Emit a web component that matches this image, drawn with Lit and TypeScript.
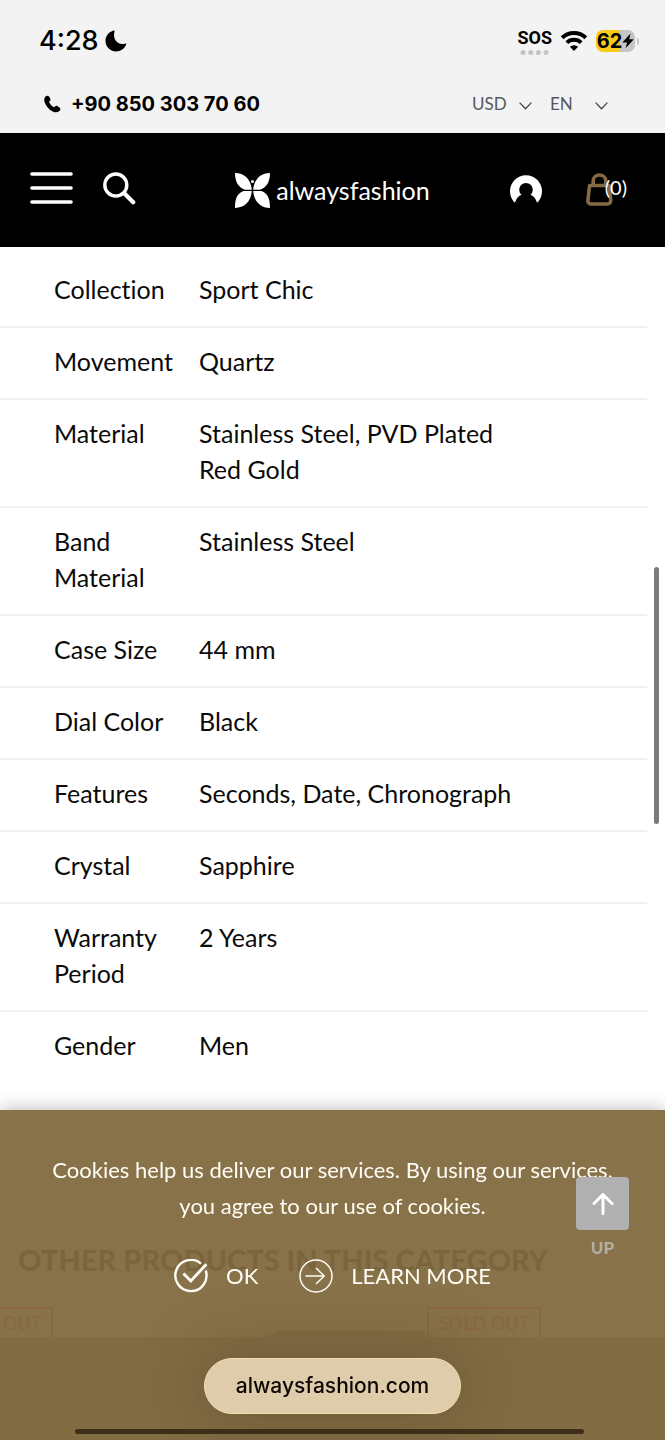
import { LitElement, html, css, svg } from "lit";
import { customElement } from "lit/decorators.js";

const SPECS: [string, string][] = [
  ["Collection", "Sport Chic"],
  ["Movement", "Quartz"],
  ["Material", "Stainless Steel, PVD Plated Red Gold"],
  ["Band Material", "Stainless Steel"],
  ["Case Size", "44 mm"],
  ["Dial Color", "Black"],
  ["Features", "Seconds, Date, Chronograph"],
  ["Crystal", "Sapphire"],
  ["Warranty Period", "2 Years"],
  ["Gender", "Men"],
];

@customElement("status-bar")
class StatusBar extends LitElement {
  static styles = css`
    :host { display: flex; justify-content: space-between; align-items: center; height: 82px; padding: 0 26px 0 39px; color: #000; }
    .left, .right { display: flex; align-items: center; }
    .left { gap: 6px; font: 500 27px/32px Inter, sans-serif; }
    .right { gap: 8px; }
    .sos { display: grid; justify-items: center; gap: 2px; font: 700 18px/20px Roboto, sans-serif; }
    .battery { display: flex; align-items: center; gap: 2px; }
    .cell { display: flex; align-items: center; justify-content: center; width: 39px; height: 22px; border-radius: 7px; background: linear-gradient(90deg, #fbc917 62%, #c6c6c6 62%); font: 700 20px/22px Inter, sans-serif; }
    .nub { width: 2px; height: 7px; border-radius: 0 2px 2px 0; background: #c6c6c6; }
    svg { display: block; }
  `;
  render() {
    return html`
      <div class="left">
        <span>4:28</span>
        <svg width="22" height="22" viewBox="0 0 22 22"><path d="M8.600.6C3.900 2 .5 6 .5 10.700 .5 16.600 5 21.400 11 21.400c4.700 0 8.700-2.800 10.300-7.200.2-.6-.2-.9-.8-.7-7.200 2.500-13.400-4-11-12 .2-.6-.2-1.100-.9-.9Z" /></svg>
      </div>
      <div class="right">
        <span class="sos">SOS
          <svg width="29" height="5" viewBox="0 0 29 5" fill="#c4c4c4"><circle cx="3" cy="2.500" r="2.500" /><circle cx="10.700" cy="2.500" r="2.500" /><circle cx="18.300" cy="2.500" r="2.500" /><circle cx="26" cy="2.500" r="2.500" /></svg>
        </span>
        <svg width="28" height="22" viewBox="0 0 28 22">
          <path d="M14 21 9.900 16.800a6 6 0 0 1 8.200 0Z" />
          <path d="M6.800 12.600a10.600 10.600 0 0 1 14.400 0M2.200 7.700a17 17 0 0 1 23.600 0" fill="none" stroke="#000" stroke-width="4" />
        </svg>
        <div class="battery">
          <div class="cell">62<svg width="12" height="16" viewBox="0 0 12 16"><path d="M8.500.5.8 8.900c-.3.400-.1.700.3.700h4L3.600 15.200 11.200 7.100c.4-.4.2-.8-.3-.8H7.200Z" /></svg></div>
          <span class="nub"></span>
        </div>
      </div>`;
  }
}

@customElement("contact-bar")
class ContactBar extends LitElement {
  static styles = css`
    :host { display: flex; justify-content: space-between; align-items: center; height: 44px; padding: 0 57px 0 44px; font-family: Lato, sans-serif; }
    .phone { display: flex; align-items: center; gap: 10px; color: #000; text-decoration: none; font: 700 20px/24px Inter, sans-serif; }
    .picks { display: flex; gap: 18px; }
    .pick { display: grid; align-items: center; }
    .pick select, .pick svg { grid-area: 1 / 1; }
    .pick svg { justify-self: end; margin-top: 4px; pointer-events: none; }
    select { appearance: none; border: 0; margin: 0; padding: 0 25px 0 0; background: none; color: #55585e; font: 400 17px/24px Lato, sans-serif; }
    .lang { padding-right: 35px; }
    svg { display: block; }
  `;
  chevron() {
    return svg`<svg width="13" height="8" viewBox="0 0 13 8" fill="none" stroke="#444" stroke-width="1.300"><path d="m.6.6 5.900 6.200L12.400.6" /></svg>`;
  }
  render() {
    return html`
      <a class="phone" href="tel:+908503037060">
        <svg width="17" height="18" viewBox="0 0 17 18"><path d="M1.500 1.600C2.700.4 4.200.5 5 1.600l1.200 1.900c.6 1 .3 2-.5 2.600-.6.500-.7.900-.4 1.500 1 1.900 2.200 3.300 4.100 4.400.6.300 1 .2 1.500-.4.700-.8 1.700-1 2.600-.4l2 1.400c1.100.8 1.200 2.100.1 3.200-1.600 1.700-4 1.900-6.800.6C5.200 14.700 2.100 11.300.7 7.400-.1 5 .1 3 1.500 1.600Z" /></svg>
        <span>+90 850 303 70 60</span>
      </a>
      <div class="picks">
        <div class="pick"><select aria-label="Currency"><option>USD</option></select>${this.chevron()}</div>
        <div class="pick"><select class="lang" aria-label="Language"><option>EN</option></select>${this.chevron()}</div>
      </div>`;
  }
}

@customElement("site-header")
class SiteHeader extends LitElement {
  static styles = css`
    :host { display: grid; grid-template-columns: 1fr auto 1fr; align-items: center; height: 114px; background: #000; color: #fff; }
    button { display: flex; padding: 0; border: 0; background: none; color: inherit; }
    .side { display: flex; align-items: center; gap: 30px; padding: 0 0 4px 30px; }
    .end { justify-content: flex-end; gap: 44px; padding: 0 38px 2px 0; }
    .logo { display: flex; align-items: center; gap: 6px; color: #fff; text-decoration: none; font: 400 25px/34px Lato, sans-serif; }
    .bag { display: grid; width: 41px; align-items: center; }
    .bag svg, .count { grid-area: 1 / 1; }
    .count { justify-self: end; padding-bottom: 4px; font: 400 20px/24px Lato, sans-serif; }
    svg { display: block; }
  `;
  render() {
    return html`
      <div class="side">
        <button aria-label="Menu"><svg width="43" height="32" viewBox="0 0 43 32" stroke="#fff" stroke-width="3.600" stroke-linecap="round"><path d="M2 2h39M2 16h39M2 30h39" /></svg></button>
        <button aria-label="Search"><svg width="33" height="33" viewBox="0 0 33 33" fill="none" stroke="#fff" stroke-linecap="round"><circle cx="12.800" cy="13" r="11" stroke-width="3.400" /><path d="m21.500 21.500 8.700 8.700" stroke-width="4.200" /></svg></button>
      </div>
      <a class="logo" href="/">
        <svg width="35" height="35" viewBox="0 0 35 35" fill="#fff">
          <path d="M0 0c9 0 16 6 16.800 16.700H10C3.500 14.500 0 9 0 0ZM35 0c-9 0-16 6-16.800 16.700H25C31.500 14.500 35 9 35 0ZM0 35c9 0 16-6 16.800-16.900H8.500C2 20.500 0 26 0 35ZM35 35c-9 0-16-6-16.800-16.900H26.500C33 20.500 35 26 35 35Z" />
          <circle cx="17.500" cy="8.500" r="1.500" />
        </svg>
        <span>alwaysfashion</span>
      </a>
      <div class="side end">
        <button aria-label="Account"><svg width="32" height="29" viewBox="0 0 32 29" fill="#fff"><path d="M5 27.800A16 16 0 1 1 27 27.800C25.800 24 24 21 20.500 19.800A6.800 6.800 0 1 0 11.500 19.800C8 21 6.200 24 5 27.800Z" /></svg></button>
        <button class="bag" aria-label="Cart, 0 items">
          <svg width="27" height="33" viewBox="0 0 27 33" fill="none" stroke="#846a43" stroke-width="3.600"><path d="M3.600 12.500h19.600l1.500 14.500c.2 2.500-1 4-3.400 4H5.500c-2.500 0-3.900-1.500-3.600-4Z" stroke-linejoin="round" /><path d="M7.200 12V8c0-8 12.600-8 12.600 0v4" /></svg>
          <span class="count">(0)</span>
        </button>
      </div>`;
  }
}

@customElement("spec-table")
class SpecTable extends LitElement {
  static styles = css`
    :host { display: block; padding: 9px 18px 0 0; font: 400 25px/36px Lato, sans-serif; font-variant-ligatures: none; color: #0a0a0a; }
    table { width: 100%; border-collapse: separate; border-spacing: 0; }
    th, td { padding: 15px 0 19px; border-bottom: 2px solid #f1f1f1; text-align: left; vertical-align: top; font-weight: 400; }
    th { width: 121px; padding-left: 54px; padding-right: 24px; }
    td { padding-right: 112px; }
    tr:last-child > * { border-bottom: 0; }
  `;
  render() {
    return html`<table><tbody>${SPECS.map(([k, v]) => html`<tr><th scope="row">${k}</th><td>${v}</td></tr>`)}</tbody></table>`;
  }
}

@customElement("other-products")
class OtherProducts extends LitElement {
  static styles = css`
    :host { display: flex; flex-direction: column; flex: 1; overflow: hidden; padding-top: 160px; font-family: Lato, sans-serif; }
    h2 { margin: 0 18px 29px; font-size: 29px; line-height: 36px; font-weight: 900; color: #111; }
    .track { display: flex; flex: 1; margin-left: -61px; }
    .card { display: flex; flex-direction: column; flex: 0 0 488px; }
    .top { display: flex; align-items: flex-end; justify-content: space-between; }
    .badge { box-sizing: border-box; width: 114px; border: 2px solid #f0564a; border-bottom: 0; color: #f0564a; font-size: 18px; font-weight: 700; line-height: 28px; text-align: center; }
    .photo { flex: 1; min-height: 80px; background: #909090; }
    svg { display: block; }
  `;
  card() {
    return html`<div class="card">
      <div class="top"><span class="badge">SOLD OUT</span><svg width="164" height="7" viewBox="0 0 164 7"><path d="M0 7 16 1h143l5 6Z" fill="#777" /></svg></div>
      <div class="photo"></div>
    </div>`;
  }
  render() {
    return html`<h2>OTHER PRODUCTS IN THIS CATEGORY</h2><div class="track">${this.card()}${this.card()}</div>`;
  }
}

@customElement("cookie-bar")
class CookieBar extends LitElement {
  static styles = css`
    :host { position: fixed; left: 0; right: 0; bottom: 0; display: flex; flex-direction: column; align-items: center; overflow: hidden; background: rgba(130, 106, 64, 0.95); color: #fffdf5; font: 400 22px/36px Lato, sans-serif; }
    p { margin: 0; padding: 42px 50px 0; text-align: center; }
    .actions { display: flex; justify-content: center; gap: 41px; padding-top: 35px; }
    .action { display: flex; align-items: center; gap: 18px; height: 34px; padding: 0; border: 0; background: none; color: inherit; font: inherit; text-decoration: none; }
    .address { margin: 65px 0 15px; padding: 0 31px; border: 1px solid #f3ddb0; border-radius: 28px; background: #dfccaa; box-shadow: 0 0 60px 10px rgba(60, 40, 20, 0.25); color: #0d0805; font: 500 21px/54px Inter, sans-serif; }
    .home { align-self: stretch; height: 5px; margin: 0 81px 6px 75px; border-radius: 3px; background: #3d2e17; }
    svg { display: block; }
  `;
  render() {
    return html`
      <p>Cookies help us deliver our services. By using our services, you agree to our use of cookies.</p>
      <div class="actions">
        <button class="action">
          <svg width="34" height="34" viewBox="0 0 34 34" fill="none" stroke="#fffdf5" stroke-width="2.400"><path d="M27 4.600A15.600 15.600 0 1 0 31.700 11.500" /><path d="m9.500 14.500 7.300 7.500L32.300 5.300" stroke-width="2.800" /></svg>
          <span>OK</span>
        </button>
        <a class="action" href="#">
          <svg width="34" height="34" viewBox="0 0 34 34" fill="none" stroke="#fffdf5" stroke-width="1.500"><circle cx="17" cy="17" r="16" /><path d="M6.500 17h18.500M17 9l8.200 8-8.200 8" /></svg>
          <span>LEARN MORE</span>
        </a>
      </div>
      <span class="address">alwaysfashion.com</span>
      <span class="home"></span>`;
  }
}

@customElement("app-root")
class AppRoot extends LitElement {
  static styles = css`
    :host { display: flex; flex-direction: column; min-height: 100vh; background: #fff; }
    .top { padding-bottom: 7px; background: #f3f3f3; }
    cookie-bar { box-shadow: 0 0 18px rgba(0, 0, 0, 0.3); }
    .scroll { position: fixed; right: 6px; top: 567px; width: 5px; height: 257px; border-radius: 3px; background: #7b7b7b; }
    .up { position: fixed; right: 36px; bottom: 180px; display: grid; justify-items: center; gap: 6px; padding: 0; border: 0; background: none; color: #b3aea4; font: 900 17px/24px Lato, sans-serif; }
    .square { display: grid; place-items: center; width: 53px; height: 53px; border-radius: 4px; background: #b0b0b0; }
  `;
  render() {
    return html`
      <div class="top"><status-bar></status-bar><contact-bar></contact-bar></div>
      <site-header></site-header>
      <spec-table></spec-table>
      <other-products></other-products>
      <cookie-bar></cookie-bar>
      <button class="up">
        <span class="square"><svg width="22" height="22" viewBox="0 0 22 22" fill="none" stroke="#fff" stroke-width="3" stroke-linecap="round" stroke-linejoin="round"><path d="M11 20.500V2M2 10.500l9-9 9 9" /></svg></span>
        UP
      </button>
      <div class="scroll"></div>`;
  }
}
